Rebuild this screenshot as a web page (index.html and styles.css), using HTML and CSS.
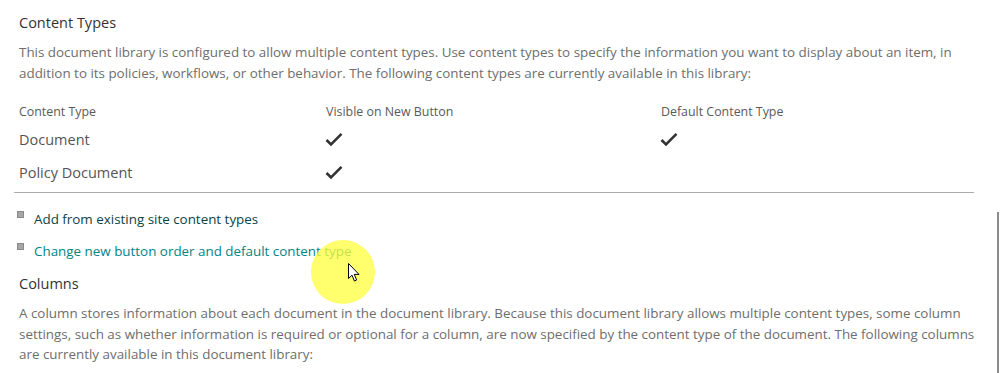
FILE: index.html
```html
<!DOCTYPE html>
<html lang="en">
<head>
  <meta charset="UTF-8">
  <title>Library Settings</title>
  <link rel="stylesheet" href="styles.css">
</head>
<body>
  <div class="page">
    <div class="section">
      <h3>Content Types</h3>
      <p class="desc">This document library is configured to allow multiple content types. Use content types to specify the information you want to display about an item, in addition to its policies, workflows, or other behavior. The following content types are currently available in this library:</p>

      <table class="ct-table">
        <thead>
          <tr>
            <th class="col1">Content Type</th>
            <th class="col2">Visible on New Button</th>
            <th>Default Content Type</th>
          </tr>
        </thead>
        <tbody>
          <tr>
            <td>Document</td>
            <td><svg class="check" width="18" height="15" viewBox="0 0 18 15"><path d="M1.5 8 L6 12.5 L16.5 1.8" fill="none" stroke="#333" stroke-width="2.6"/></svg></td>
            <td><svg class="check" width="18" height="15" viewBox="0 0 18 15"><path d="M1.5 8 L6 12.5 L16.5 1.8" fill="none" stroke="#333" stroke-width="2.6"/></svg></td>
          </tr>
          <tr>
            <td>Policy Document</td>
            <td><svg class="check" width="18" height="15" viewBox="0 0 18 15"><path d="M1.5 8 L6 12.5 L16.5 1.8" fill="none" stroke="#333" stroke-width="2.6"/></svg></td>
            <td></td>
          </tr>
        </tbody>
      </table>
    </div>

    <ul class="links">
      <li><a href="#" class="visited">Add from existing site content types</a></li>
      <li><a href="#">Change new button order and default content type</a></li>
    </ul>

    <div class="section">
      <h3>Columns</h3>
      <p class="desc">A column stores information about each document in the document library. Because this document library allows multiple content types, some column settings, such as whether information is required or optional for a column, are now specified by the content type of the document. The following columns are currently available in this document library:</p>
    </div>
  </div>

  <div class="scroll"></div>

  <!-- pointer highlight from the screen recording -->
  <div class="pointer">
    <svg width="12" height="19" viewBox="0 0 12 19">
      <path d="M0.5 0.5 L0.5 15.5 L4 12.2 L6.4 18 L8.6 17 L6.3 11.4 L11 11.4 Z" fill="#fff" stroke="#000" stroke-width="1"/>
    </svg>
  </div>
</body>
</html>
```

FILE: styles.css
```css
body {
  margin: 0;
  font-family: "Open Sans", "Noto Sans", sans-serif;
  color: #444;
  background: #fff;
  width: 1002px;
  height: 373px;
  overflow: hidden;
  position: relative;
}
.page {
  padding: 12px 28px 0 14px;
}
.section {
  padding-left: 5px;
}
h3 {
  margin: 0;
  font-size: 14.5px;
  font-weight: normal;
  color: #333;
  line-height: 22px;
}
.desc {
  margin: 8px -12px 0 0;
  font-size: 13.4px;
  line-height: 20.5px;
  color: #6e6e6e;
}
.ct-table {
  border-collapse: collapse;
  margin-top: 16px;
  width: 100%;
}
.ct-table th {
  text-align: left;
  font-weight: normal;
  font-size: 12.4px;
  color: #5a5a5a;
  padding: 0;
  height: 24px;
}
.ct-table .col1 { width: 307px; }
.ct-table .col2 { width: 335px; }
.ct-table td {
  font-size: 14.5px;
  color: #555;
  padding: 0;
  height: 33px;
}
.check {
  display: block;
  margin-left: -1px;
}
.links {
  list-style: none;
  margin: 3px 0 2px;
  padding: 16px 0 0 0;
  border-top: 1px solid #ababab;
}
.links li {
  font-size: 13.4px;
  line-height: 20px;
  margin-bottom: 12px;
  padding-left: 20px;
  position: relative;
}
.links li::before {
  content: "";
  position: absolute;
  left: 3px;
  top: 2px;
  width: 5px;
  height: 5px;
  background: #a6a6a6;
  border: 1px solid #8a8a8a;
}
.links a {
  color: #038387;
  text-decoration: none;
}
.links a.visited {
  color: #0a4446;
}
.scroll {
  position: absolute;
  left: 997px;
  top: 212px;
  width: 2px;
  height: 161px;
  background: #8c8c8c;
}
.pointer {
  position: absolute;
  left: 311px;
  top: 240px;
  width: 64px;
  height: 64px;
  border-radius: 50%;
  background: rgba(255, 255, 60, 0.75);
}
.pointer svg {
  position: absolute;
  left: 37px;
  top: 23px;
}
```
